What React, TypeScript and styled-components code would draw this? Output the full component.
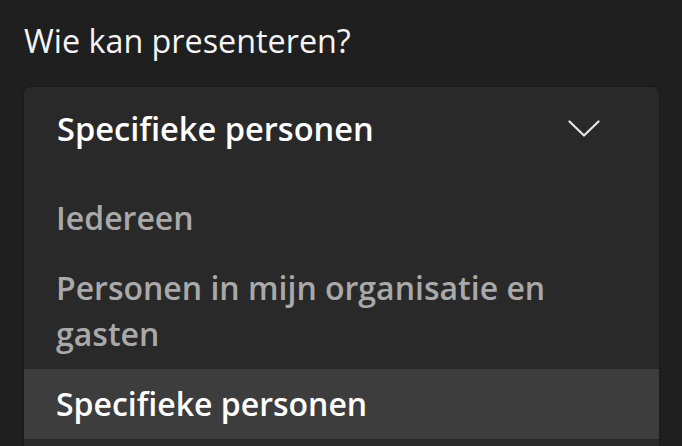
import React from "react";
import styled, { createGlobalStyle } from "styled-components";

const GlobalStyle = createGlobalStyle`
  html, body {
    margin: 0;
    padding: 0;
    background: #1f1f1f;
    overflow: hidden;
  }
  body {
    font-family: "Open Sans", "Noto Sans", sans-serif;
  }
`;

const Page = styled.div`
  width: 682px;
  height: 446px;
  box-sizing: border-box;
  padding: 17px 23px 0 24px;
  background: #1f1f1f;
  display: flex;
  flex-direction: column;
  overflow: hidden;
`;

const Title = styled.div`
  font-size: 32.3px;
  line-height: 46px;
  font-weight: 400;
  color: #f5f5f5;
  margin-bottom: 24px;
`;

const Panel = styled.div`
  background: #292929;
  border-radius: 6px;
  box-shadow: 0 0 2px rgba(0, 0, 0, 0.5);
  padding-bottom: 40px;
  display: flex;
  flex-direction: column;
`;

const Header = styled.div`
  display: flex;
  align-items: center;
  justify-content: space-between;
  padding: 19px 59px 31px 33px;
`;

const HeaderText = styled.span`
  font-size: 32.6px;
  line-height: 46px;
  font-weight: 600;
  color: #ffffff;
`;

const Chevron = styled.svg`
  width: 32px;
  height: 18px;
  display: block;
  margin-top: 0px;
`;

const List = styled.ul`
  list-style: none;
  margin: 0;
  padding: 0;
`;

const Option = styled.li<{ $selected?: boolean }>`
  padding: 12px 100px 12px 32px;
  font-size: 32px;
  line-height: 46px;
  font-weight: 600;
  color: ${(p) => (p.$selected ? "#ffffff" : "#a9a9a9")};
  background: ${(p) => (p.$selected ? "#3d3d3d" : "transparent")};
`;

const options = [
  { label: "Iedereen", selected: false },
  { label: "Personen in mijn organisatie en gasten", selected: false },
  { label: "Specifieke personen", selected: true },
];

export default function App() {
  return (
    <>
      <GlobalStyle />
      <Page>
        <Title>Wie kan presenteren?</Title>
        <Panel>
          <Header>
            <HeaderText>Specifieke personen</HeaderText>
            <Chevron viewBox="0 0 32 18" fill="none">
              <polyline
                points="1.5,1.5 16,15.5 30.5,1.5"
                stroke="#e6e6e6"
                strokeWidth="2.2"
                strokeLinecap="round"
                strokeLinejoin="round"
              />
            </Chevron>
          </Header>
          <List>
            {options.map((o) => (
              <Option key={o.label} $selected={o.selected}>
                {o.label}
              </Option>
            ))}
          </List>
        </Panel>
      </Page>
    </>
  );
}
